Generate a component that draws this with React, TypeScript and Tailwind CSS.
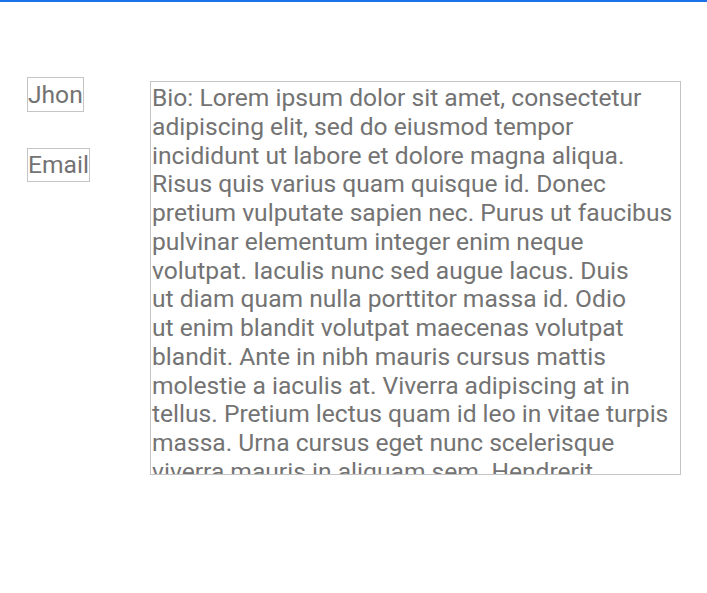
import React from 'react';

const bioLines = [
  'Bio: Lorem ipsum dolor sit amet, consectetur',
  'adipiscing elit, sed do eiusmod tempor',
  'incididunt ut labore et dolore magna aliqua.',
  'Risus quis varius quam quisque id. Donec',
  'pretium vulputate sapien nec. Purus ut faucibus',
  'pulvinar elementum integer enim neque',
  'volutpat. Iaculis nunc sed augue lacus. Duis',
  'ut diam quam nulla porttitor massa id. Odio',
  'ut enim blandit volutpat maecenas volutpat',
  'blandit. Ante in nibh mauris cursus mattis',
  'molestie a iaculis at. Viverra adipiscing at in',
  'tellus. Pretium lectus quam id leo in vitae turpis',
  'massa. Urna cursus eget nunc scelerisque',
  'viverra mauris in aliquam sem. Hendrerit',
  'gravida rutrum quisque non tellus orci ac auctor',
];

const App: React.FC = () => {
  return (
    <div className="min-h-[593px] w-full bg-white border-t-2 border-[#1a73e8] font-['Roboto',sans-serif] text-[24.6px] leading-[28.75px] text-[#737373]">
      <div className="flex items-start pl-[27px] pt-[75px]">
        {/* Left fields */}
        <div className="flex w-[123px] flex-col items-start gap-[36px]">
          <div className="border border-[#c4c4c4] py-[2px] leading-[29px]">Jhon</div>
          <div className="border border-[#c4c4c4] py-[2px] leading-[28px]">Email</div>
        </div>

        {/* Bio box */}
        <div className="mt-[4px] h-[394px] w-[531px] overflow-hidden border border-[#c4c4c4] px-px pt-[2px]">
          {bioLines.map((line) => (
            <div key={line} className="whitespace-pre">
              {line}
            </div>
          ))}
        </div>
      </div>
    </div>
  );
};

export default App;
